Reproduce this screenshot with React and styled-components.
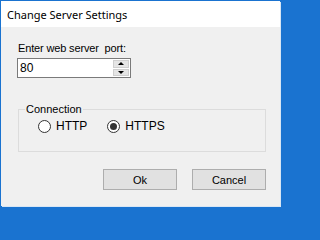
import React, { useState } from 'react';
import styled, { createGlobalStyle } from 'styled-components';

const GlobalStyle = createGlobalStyle`
  html, body {
    margin: 0;
    padding: 0;
    background: #1a73d0;
  }
  body {
    width: 284px;
    height: 210px;
    overflow: hidden;
  }
`;

const Desktop = styled.div`
  width: 284px;
  height: 210px;
  padding: 1px 4px 4px 1px;
  box-sizing: border-box;
  display: flex;
`;

const Window = styled.div`
  flex: 1;
  display: flex;
  flex-direction: column;
  background: #f0f0f0;
  box-shadow: 1px 1px 0 #d8e6f4;
`;

const TitleBar = styled.div`
  height: 26px;
  background: #ffffff;
  display: flex;
  align-items: center;
  padding-left: 6px;
  font-family: "Noto Sans", "Open Sans", sans-serif;
  font-size: 11px;
  color: #000;
`;

const Body = styled.div`
  flex: 1;
  display: flex;
  flex-direction: column;
  padding: 15px 0 0 16px;
  font-family: "Liberation Sans", Arial, sans-serif;
  font-size: 11px;
  color: #000;
`;

const Label = styled.div`
  line-height: 13px;
  white-space: pre;
  padding-left: 1px;
  letter-spacing: -0.15px;
`;

const SpinBox = styled.div`
  margin-top: 3px;
  width: 114px;
  height: 20px;
  box-sizing: border-box;
  border: 1px solid #7a7a7a;
  background: #fff;
  display: flex;
  align-items: stretch;
`;

const SpinInput = styled.input`
  flex: 1;
  min-width: 0;
  border: none;
  outline: none;
  padding: 0 0 0 2px;
  font-family: "Liberation Sans", Arial, sans-serif;
  font-size: 12px;
  color: #000;
  background: transparent;
`;

const SpinButtons = styled.div`
  width: 16px;
  display: flex;
  flex-direction: column;
  padding: 1px 1px 1px 0;
  gap: 1px;
`;

const SpinBtn = styled.div`
  flex: 1;
  background: #e5e5e5;
  border: 1px solid #cfcfcf;
  display: flex;
  align-items: center;
  justify-content: center;
  &::after {
    content: '';
    width: 0;
    height: 0;
    border-left: 3px solid transparent;
    border-right: 3px solid transparent;
    ${(p) => (p.down ? 'border-top: 3px solid #000;' : 'border-bottom: 3px solid #000;')}
  }
`;

const Group = styled.fieldset`
  margin: 25px 0 0 1px;
  width: 248px;
  height: 49px;
  box-sizing: border-box;
  border: 1px solid #dcdcdc;
  padding: 0 0 0 19px;
  display: flex;
  align-items: center;
  gap: 20px;
`;

const Legend = styled.legend`
  padding: 0 1px;
  margin-left: -13px;
  line-height: 13px;
`;

const RadioLabel = styled.label`
  display: flex;
  align-items: center;
  gap: 5px;
  font-size: 12px;
  margin-top: 3px;
  cursor: default;
`;

const RadioCircle = styled.span`
  width: 13px;
  height: 13px;
  box-sizing: border-box;
  border: 1px solid #333;
  border-radius: 50%;
  background: #fff;
  display: flex;
  align-items: center;
  justify-content: center;
  &::after {
    content: '';
    width: 7px;
    height: 7px;
    border-radius: 50%;
    background: ${(p) => (p.checked ? '#333' : 'transparent')};
  }
`;

const Buttons = styled.div`
  display: flex;
  gap: 15px;
  margin: 17px 0 0 86px;
`;

const Button = styled.button`
  width: 74px;
  height: 21px;
  box-sizing: border-box;
  background: #e1e1e1;
  border: 1px solid #adadad;
  font-family: "Liberation Sans", Arial, sans-serif;
  font-size: 11px;
  color: #000;
  padding: 0;
`;

function Radio({ label, checked, onSelect }) {
  return (
    <RadioLabel onClick={onSelect}>
      <RadioCircle checked={checked} />
      {label}
    </RadioLabel>
  );
}

export default function App() {
  const [port, setPort] = useState('80');
  const [proto, setProto] = useState('https');

  return (
    <>
      <GlobalStyle />
      <Desktop>
        <Window>
          <TitleBar>Change Server Settings</TitleBar>
          <Body>
            <Label>{'Enter web server  port:'}</Label>
            <SpinBox>
              <SpinInput value={port} onChange={(e) => setPort(e.target.value)} />
              <SpinButtons>
                <SpinBtn onClick={() => setPort(String(Number(port) + 1))} />
                <SpinBtn down onClick={() => setPort(String(Number(port) - 1))} />
              </SpinButtons>
            </SpinBox>
            <Group>
              <Legend>Connection</Legend>
              <Radio label="HTTP" checked={proto === 'http'} onSelect={() => setProto('http')} />
              <Radio label="HTTPS" checked={proto === 'https'} onSelect={() => setProto('https')} />
            </Group>
            <Buttons>
              <Button>Ok</Button>
              <Button>Cancel</Button>
            </Buttons>
          </Body>
        </Window>
      </Desktop>
    </>
  );
}
